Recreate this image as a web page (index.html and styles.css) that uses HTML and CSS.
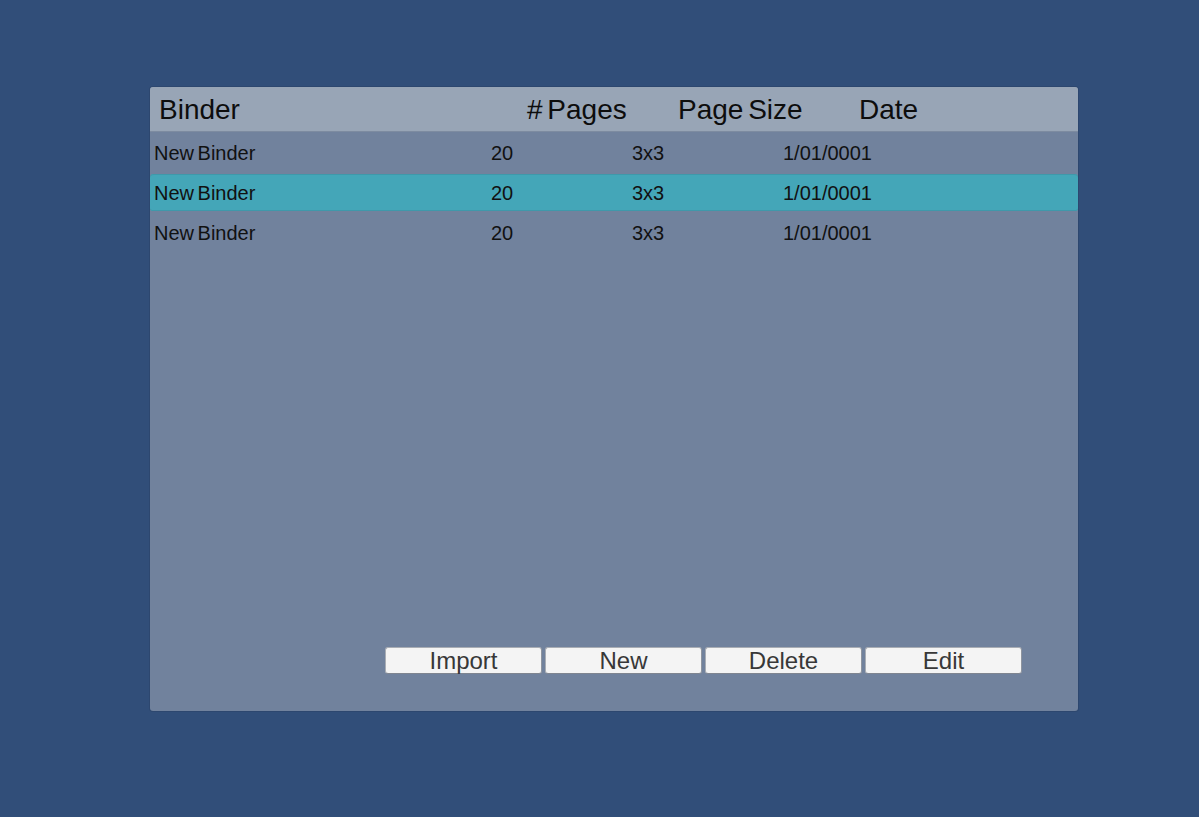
FILE: index.html
```html
<!DOCTYPE html>
<html>
<head>
<meta charset="utf-8">
<link rel="stylesheet" href="styles.css">
</head>
<body>
<div class="panel">
  <div class="header">
    <div class="hcell h-name">Binder</div>
    <div class="hcell h-pages"># Pages</div>
    <div class="hcell h-size">Page Size</div>
    <div class="hcell h-date">Date</div>
  </div>
  <div class="list">
    <div class="row">
      <div class="cell c-name">New Binder</div>
      <div class="cell c-pages">20</div>
      <div class="cell c-size">3x3</div>
      <div class="cell c-date">1/01/0001</div>
    </div>
    <div class="row selected">
      <div class="cell c-name">New Binder</div>
      <div class="cell c-pages">20</div>
      <div class="cell c-size">3x3</div>
      <div class="cell c-date">1/01/0001</div>
    </div>
    <div class="row">
      <div class="cell c-name">New Binder</div>
      <div class="cell c-pages">20</div>
      <div class="cell c-size">3x3</div>
      <div class="cell c-date">1/01/0001</div>
    </div>
  </div>
  <div class="actions">
    <button class="btn">Import</button>
    <button class="btn">New</button>
    <button class="btn">Delete</button>
    <button class="btn">Edit</button>
  </div>
</div>
</body>
</html>
```
FILE: styles.css
```css
html, body {
  margin: 0;
  padding: 0;
}
body {
  background: #314e79;
  width: 1199px;
  height: 817px;
  overflow: hidden;
  font-family: "Liberation Sans", Arial, sans-serif;
}
.panel {
  margin: 87px 0 0 150px;
  width: 928px;
  height: 624px;
  background: #71829d;
  border-radius: 3px;
  display: flex;
  flex-direction: column;
  box-sizing: border-box;
  box-shadow: 0 0 0 1px rgba(40, 60, 95, 0.35);
}
.header {
  height: 45px;
  display: flex;
  align-items: flex-start;
  padding: 2px 0 0 9px;
  background: #98a5b6;
  border-radius: 3px 3px 0 0;
  border-bottom: 1px solid #7d8ba0;
  box-sizing: border-box;
}
.hcell {
  font-size: 28px;
  line-height: 42px;
  color: #0d0d0d;
  word-spacing: -3px;
  white-space: nowrap;
}
.h-name { width: 368px; }
.h-pages { width: 151px; }
.h-size { width: 181px; }
.h-date { flex: 1; }
.list {
  flex: 1;
  display: flex;
  flex-direction: column;
  padding-top: 1px;
}
.row {
  height: 40px;
  display: flex;
  align-items: center;
  padding-left: 4px;
  box-sizing: border-box;
}
.row.selected {
  background: #44a6b8;
  background-clip: padding-box;
  border-top: 1px solid transparent;
  border-bottom: 2px solid transparent;
  border-radius: 4px;
  padding-top: 1px;
  box-shadow: inset 0 1px 0 #3f98aa, inset 0 -1px 0 #3f98aa;
}
.cell {
  font-size: 20px;
  line-height: 24px;
  color: #111;
  word-spacing: -2px;
  white-space: nowrap;
}
.c-name { width: 337px; }
.c-pages { width: 141px; }
.c-size { width: 151px; }
.c-date { flex: 1; }
.actions {
  display: flex;
  gap: 3px;
  padding-left: 235px;
  padding-bottom: 37px;
}
.btn {
  width: 157px;
  height: 27px;
  padding: 0;
  margin: 0;
  background: #f4f4f4;
  border: 1px solid #a9adb4;
  border-bottom-color: #7f8590;
  border-right-color: #8e949e;
  border-radius: 3px;
  font-family: "Liberation Sans", Arial, sans-serif;
  font-size: 24px;
  line-height: 25px;
  color: #383838;
}
```
